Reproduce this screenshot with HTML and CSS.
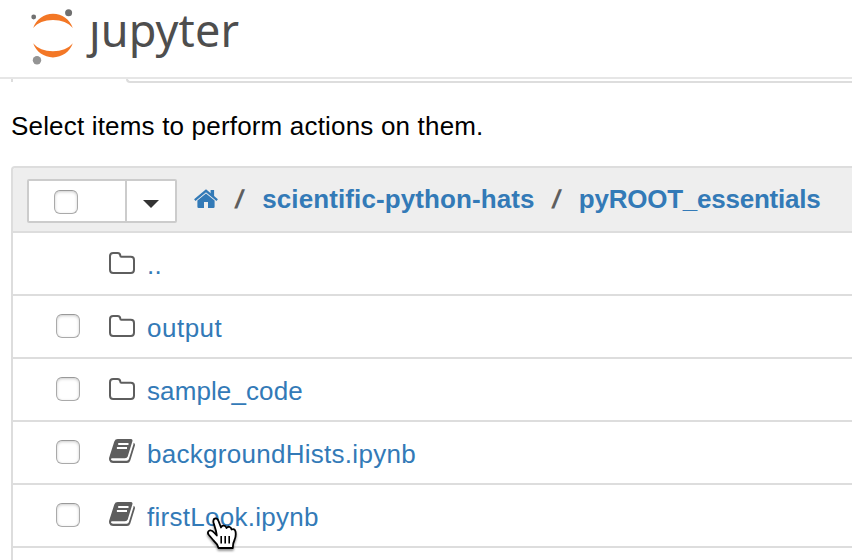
FILE: index.html
```html
<!DOCTYPE html>
<html lang="en">
<head>
<meta charset="utf-8">
<title>Jupyter</title>
<link rel="stylesheet" href="styles.css">
</head>
<body>
<svg class="defs" width="0" height="0" aria-hidden="true">
  <symbol id="folder" viewBox="0 0 26 22"><path d="M1 4.2Q1 1 4.2 1H8.500Q11.300 1 11.300 3.800Q11.300 4.700 12.300 4.700H21.800Q25 4.700 25 7.900V17.800Q25 21 21.800 21H4.200Q1 21 1 17.800Z" fill="none" stroke="#5e5e5e" stroke-width="2"/></symbol>
  <symbol id="book" viewBox="0 0 26 24"><path d="M8.800 0H21.500Q24 0 23.400 2.300L18.700 17.500Q18.100 19.300 16 19.300H3.200Q1.600 19.300 2 20.600Q2.400 21.700 4 21.700H17.700Q19.300 21.700 19.800 20.300L24.500 5V3.800Q26.400 4.700 25.900 6.600L21.300 21.400Q20.500 24 18 24H4Q1.200 24 .3 21.400Q-.2 20 .2 18.600L5.300 2.400Q6.200 0 8.800 0Z" fill="#5e5e5e"/><path d="M9.200 5H19.500M7.900 9H18" stroke="#fff" stroke-width="2"/></symbol>
</svg>
<header class="top">
  <svg class="logo" width="260" height="77" viewBox="0 0 260 77">
    <path d="M33.200 28C36 19.500 44 13.800 53 13.800S70 19.500 72.800 28C68.500 22.700 61.500 20 53 20S37.500 22.700 33.200 28Z" fill="#f37726"/>
    <path d="M33.200 43.300C36 51.700 44 57.400 53 57.400S70 51.700 72.800 43.300C68.500 48.600 61.500 51.300 53 51.300S37.500 48.600 33.200 43.300Z" fill="#f37726"/>
    <circle cx="33.700" cy="17" r="2.400" fill="#707070"/>
    <circle cx="68.600" cy="12.700" r="3.500" fill="#707070"/>
    <circle cx="37" cy="60.200" r="4.200" fill="#949494"/>
    <text class="wordmark" x="89" y="47" textLength="150">ȷupyter</text>
  </svg>
</header>
<div class="tabs"><div class="tab"></div><div class="tab-line"></div></div>
<p class="hint"><span>Select items to perform actions on them.</span></p>
<main class="list">
  <div class="list-head">
    <div class="selector">
      <div class="select-all"><i class="check"></i></div>
      <div class="drop"><i class="caret"></i></div>
    </div>
    <svg class="home" width="24" height="20" viewBox="0 0 24 20"><path d="M.8 11.200L12 1.800L23.200 11.200" fill="none" stroke="#337ab7" stroke-width="2.200"/><path d="M16.600 1H20.100V8.500L16.600 5.500ZM3.400 11.500L12 4.400L20.600 11.500V17.800Q20.600 19 19.400 19H14V13H10V19H4.600Q3.400 19 3.400 17.800Z" fill="#337ab7"/></svg>
    <b class="slash one">/</b><a class="crumb first">scientific-python-hats</a><b class="slash two">/</b><a class="crumb second">pyROOT_essentials</a>
  </div>
  <div class="row"><i class="check hidden"></i><svg class="folder"><use href="#folder"/></svg><a>..</a></div>
  <div class="row"><i class="check"></i><svg class="folder"><use href="#folder"/></svg><a class="loose">output</a></div>
  <div class="row"><i class="check"></i><svg class="folder"><use href="#folder"/></svg><a class="tight">sample_code</a></div>
  <div class="row"><i class="check"></i><svg class="book"><use href="#book"/></svg><a>backgroundHists.ipynb</a></div>
  <div class="row"><i class="check"></i><svg class="book"><use href="#book"/></svg><a>firstLook.ipynb</a></div>
  <div class="rest"></div>
</main>
<svg class="cursor" width="36" height="40" viewBox="0 0 36 40"><path d="M11 17L8.500 8.500Q7.800 5 10.200 4.500Q12.500 4.200 13.500 7L16 13.500Q17 11.300 19 11.600Q21 11.800 21.500 14Q23 12.200 24.800 13Q26.300 13.600 26.500 15.500Q29.600 14.200 30.500 17.500Q31.300 22 29.500 26Q27.800 29 27.800 34H13.500Q12.500 30 8.500 26.500Q6 23.500 3.500 20.500Q2 18 4.500 16.500Q7 15.800 9 18.500L11.800 21.500Z" fill="#fff" stroke="#000" stroke-width="1.800" stroke-linejoin="round"/><path d="M16.200 22V29.500M20.200 22V29.500M24.200 22V29.500" stroke="#000" stroke-width="1.600"/></svg>
</body>
</html>
```
FILE: styles.css
```css
* { box-sizing: border-box; }
body {
  margin: 0;
  width: 852px;
  height: 560px;
  overflow: hidden;
  background: #fff;
  color: #000;
  font: 26px/36px "Liberation Sans", Arial, sans-serif;
}
svg { display: block; flex: none; }
.defs { position: absolute; }
.top { height: 79px; border-bottom: 2px solid #e6e6e6; }
.wordmark { font: 45px "Noto Sans", sans-serif; fill: #4e4e4e; }
.tabs { display: flex; height: 4px; padding-left: 11px; }
.tab { width: 115px; height: 3px; border-left: 2px solid #ddd; }
.tab-line {
  flex: 1;
  border: solid #ddd;
  border-width: 0 0 2px 2px;
  border-bottom-left-radius: 4px;
}
.hint { margin: 25px 0 0 11px; height: 58px; white-space: nowrap; letter-spacing: .18px; }
.list {
  margin-left: 11px;
  border: solid #ddd;
  border-width: 2px 0 0 2px;
  border-top-left-radius: 4px;
}
.list-head {
  display: flex;
  align-items: flex-start;
  height: 65px;
  padding: 11px 0 0 14px;
  background: #eee;
  border-bottom: 2px solid #ddd;
  border-top-left-radius: 2px;
  white-space: nowrap;
}
.selector {
  display: flex;
  width: 150px;
  height: 44px;
  border: 2px solid #ccc;
  border-radius: 2px;
  background: #fff;
}
.select-all { width: 98px; padding: 9px 0 0 25px; border-right: 2px solid #ccc; }
.drop { padding: 19px 0 0 16px; }
.caret {
  display: block;
  border: solid transparent;
  border-width: 8px 8px 0;
  border-top-color: #333;
}
.check {
  display: block;
  flex: none;
  width: 24px;
  height: 24px;
  border: 1px solid #aaa;
  border-top-color: #999;
  border-radius: 6px;
  background: #fff;
  box-shadow: inset 0 1px 3px #ccc;
}
.hidden { visibility: hidden; }
.home { margin: 10px 0 0 17px; }
.slash, .crumb { margin-top: 2px; font-weight: bold; }
.slash { color: #5e5e5e; transform: skewX(-12deg); }
.one { margin-left: 18px; }
.first { margin-left: 19px; letter-spacing: .1px; }
.two { margin-left: 18px; }
.second { margin-left: 19px; letter-spacing: -.24px; }
.crumb, .row a { color: #337ab7; }
.row {
  display: flex;
  height: 63px;
  padding: 18px 0 0 43px;
  border-bottom: 2px solid #ddd;
  white-space: nowrap;
}
.rest { height: 12px; }
.row a { margin: -4px 0 0 12px; letter-spacing: .28px; }
.row .loose { letter-spacing: .5px; }
.row .tight { letter-spacing: .1px; }
.folder { width: 26px; height: 22px; margin: 1px 0 0 29px; }
.book { width: 26px; height: 24px; margin: -1px 0 0 29px; }
.cursor {
  position: absolute;
  left: 205px;
  top: 514px;
  filter: drop-shadow(0 2px 1px rgba(0, 0, 0, .4));
}
```
